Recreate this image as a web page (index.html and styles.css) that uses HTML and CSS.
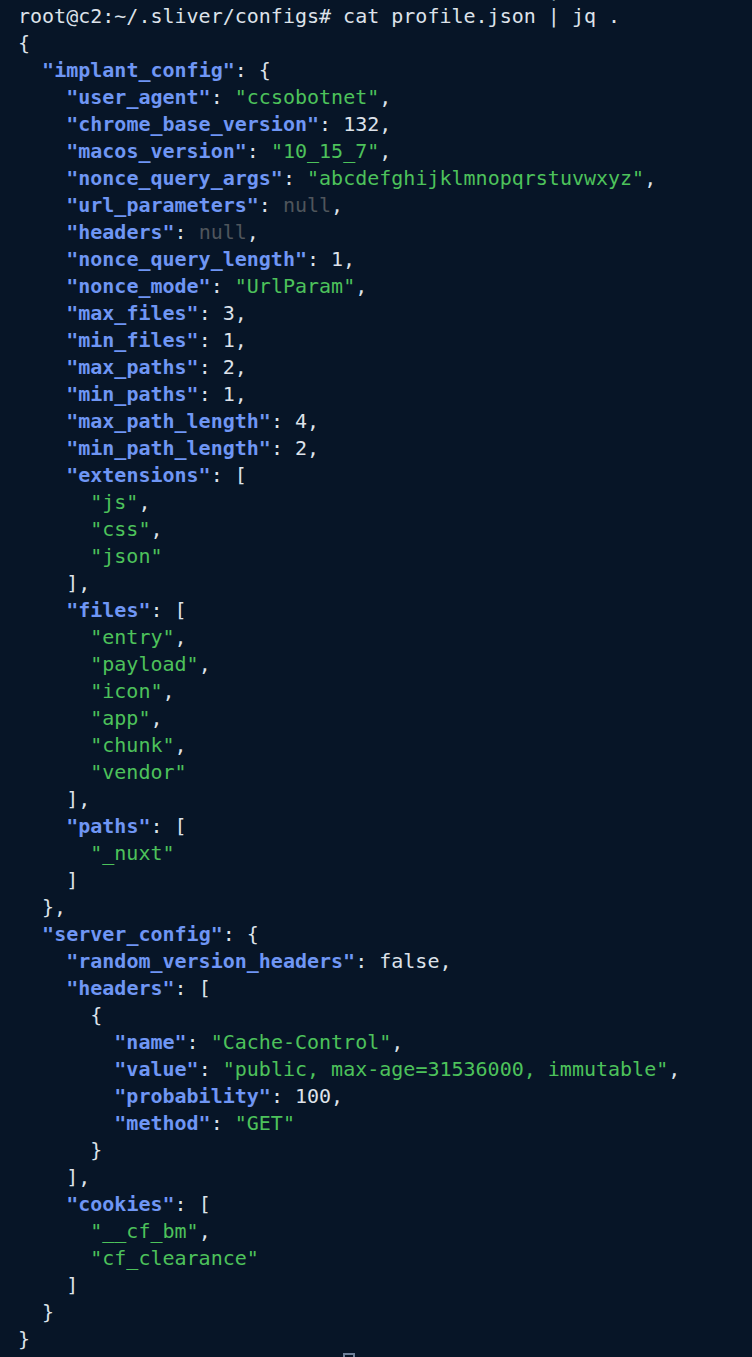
FILE: index.html
```html
<!DOCTYPE html>
<html>
<head>
<meta charset="utf-8">
<link rel="stylesheet" href="styles.css">
</head>
<body>
<main class="terminal">
<pre class="out"><span class="prev">root@c2:~/.sliver/configs# cat profile.json | jq .</span>
root@c2:~/.sliver/configs# cat profile.json | jq .
{
  <span class="k">"implant_config"</span>: {
    <span class="k">"user_agent"</span>: <span class="s">"ccsobotnet"</span>,
    <span class="k">"chrome_base_version"</span>: 132,
    <span class="k">"macos_version"</span>: <span class="s">"10_15_7"</span>,
    <span class="k">"nonce_query_args"</span>: <span class="s">"abcdefghijklmnopqrstuvwxyz"</span>,
    <span class="k">"url_parameters"</span>: <span class="n">null</span>,
    <span class="k">"headers"</span>: <span class="n">null</span>,
    <span class="k">"nonce_query_length"</span>: 1,
    <span class="k">"nonce_mode"</span>: <span class="s">"UrlParam"</span>,
    <span class="k">"max_files"</span>: 3,
    <span class="k">"min_files"</span>: 1,
    <span class="k">"max_paths"</span>: 2,
    <span class="k">"min_paths"</span>: 1,
    <span class="k">"max_path_length"</span>: 4,
    <span class="k">"min_path_length"</span>: 2,
    <span class="k">"extensions"</span>: [
      <span class="s">"js"</span>,
      <span class="s">"css"</span>,
      <span class="s">"json"</span>
    ],
    <span class="k">"files"</span>: [
      <span class="s">"entry"</span>,
      <span class="s">"payload"</span>,
      <span class="s">"icon"</span>,
      <span class="s">"app"</span>,
      <span class="s">"chunk"</span>,
      <span class="s">"vendor"</span>
    ],
    <span class="k">"paths"</span>: [
      <span class="s">"_nuxt"</span>
    ]
  },
  <span class="k">"server_config"</span>: {
    <span class="k">"random_version_headers"</span>: false,
    <span class="k">"headers"</span>: [
      {
        <span class="k">"name"</span>: <span class="s">"Cache-Control"</span>,
        <span class="k">"value"</span>: <span class="s">"public, max-age=31536000, immutable"</span>,
        <span class="k">"probability"</span>: 100,
        <span class="k">"method"</span>: <span class="s">"GET"</span>
      }
    ],
    <span class="k">"cookies"</span>: [
      <span class="s">"__cf_bm"</span>,
      <span class="s">"cf_clearance"</span>
    ]
  }
}
                           <span class="cursor"></span></pre>
</main>
</body>
</html>
```

FILE: styles.css
```css
html, body {
  margin: 0;
  padding: 0;
  background: #071527;
  height: 100%;
  overflow: hidden;
}

.terminal {
  padding-left: 18px;
  margin-top: -24px;
}

.out {
  margin: 0;
  font-family: "DejaVu Sans Mono", "Liberation Mono", monospace;
  font-size: 20px;
  line-height: 27px;
  color: #dde2ea;
  white-space: pre;
}

.k {
  color: #6f96f4;
  font-weight: bold;
}

.s {
  color: #4dc25b;
}

.n {
  color: #4f555c;
}

.cursor {
  display: inline-block;
  box-sizing: border-box;
  width: 12px;
  height: 27px;
  border: 2px solid #6f8099;
  vertical-align: top;
}
```
